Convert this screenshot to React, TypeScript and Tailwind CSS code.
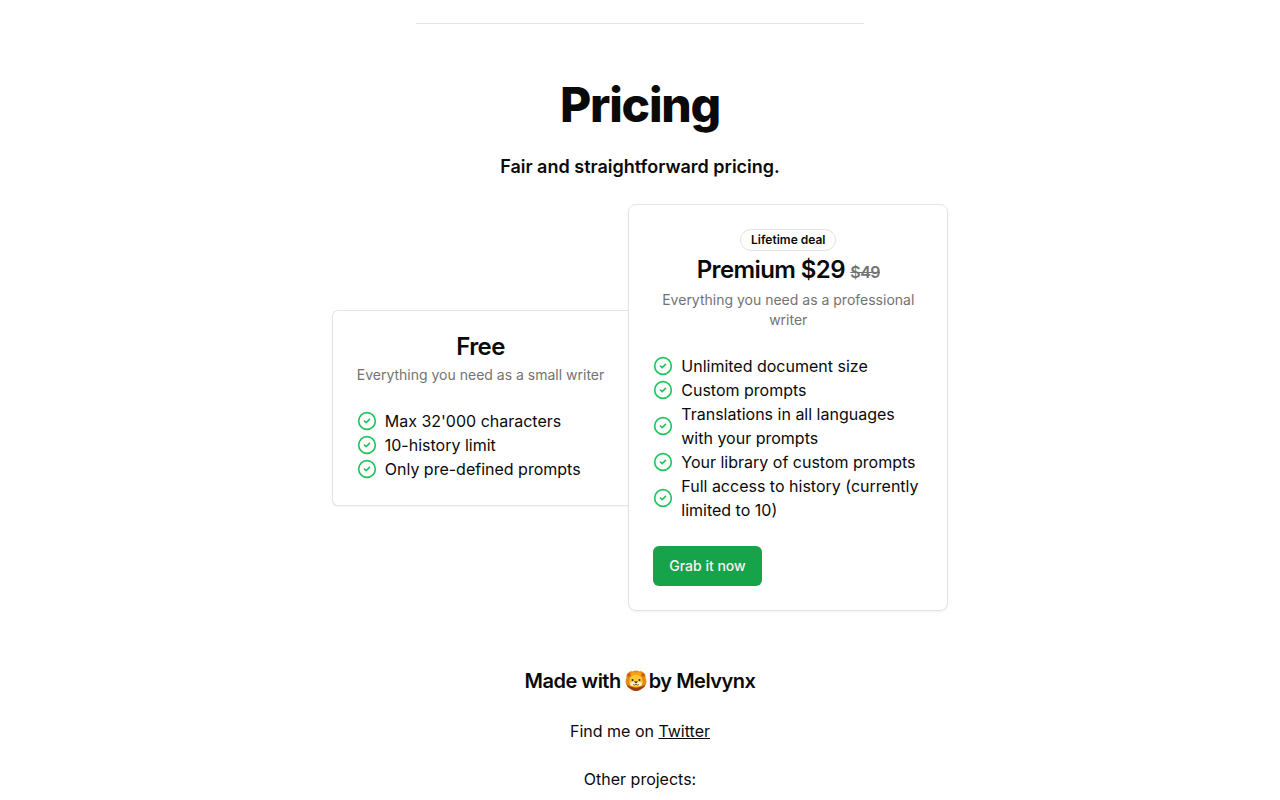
import type { ReactNode } from 'react'
import { CircleCheck } from 'lucide-react'

const FREE_FEATURES = ["Max 32'000 characters", '10-history limit', 'Only pre-defined prompts']

const PREMIUM_FEATURES = [
    'Unlimited document size',
    'Custom prompts',
    'Translations in all languages with your prompts',
    'Your library of custom prompts',
    'Full access to history (currently limited to 10)',
]

export default function App() {
    return (
        <div className="min-h-screen bg-white font-['Inter',sans-serif] text-[#0a0a0a]">
            <main className="flex flex-col items-center pt-[23px]">
                <hr className="w-full max-w-md border-[#e4e4e7]" />

                <section className="mt-[57px] flex w-full flex-col items-center gap-6">
                    <h2 className="text-5xl leading-none font-extrabold tracking-tight">Pricing</h2>
                    <p className="text-lg leading-[27px] font-semibold">Fair and straightforward pricing.</p>

                    <div className="flex items-center justify-center max-sm:flex-col">
                        <div className="rounded-l-md border border-r-0 border-[#e4e4e7] bg-white p-6 shadow-xs">
                            <div className="flex flex-col items-center gap-1.5 text-center">
                                <h3 className="text-2xl leading-none font-semibold tracking-tight">Free</h3>
                                <p className="text-sm text-[#737373]">Everything you need as a small writer</p>
                            </div>
                            <FeatureList features={FREE_FEATURES} />
                        </div>

                        <div className="max-w-xs rounded-lg border border-[#e4e4e7] bg-white p-6 shadow-xs">
                            <div className="flex flex-col items-center gap-1.5 text-center">
                                <span className="rounded-full border border-[#e4e4e7] px-2.5 py-0.5 text-xs font-semibold">Lifetime deal</span>
                                <h3 className="pb-0.5 text-2xl leading-[25px] font-semibold tracking-tight">
                                    Premium $29 <s className="text-base leading-none text-[#737373]">$49</s>
                                </h3>
                                <p className="text-sm text-[#737373]">Everything you need as a professional writer</p>
                            </div>
                            <FeatureList features={PREMIUM_FEATURES} />
                            <button type="button" className="mt-6 h-10 rounded-md bg-[#16a34a] px-4 text-sm font-medium text-[#fff1f2] hover:bg-[#15803d]">
                                Grab it now
                            </button>
                        </div>
                    </div>
                </section>

                <footer className="mt-14 flex flex-col items-center gap-6">
                    <h3 className="flex items-center text-xl font-semibold tracking-tight">
                        <span className="mr-1">Made with</span>
                        <Lion />
                        <span className="ml-0.5">by Melvynx</span>
                    </h3>
                    <p>
                        Find me on <FooterLink href="#twitter">Twitter</FooterLink>
                    </p>
                    <p>Other projects:</p>
                </footer>
            </main>
        </div>
    )
}

function FeatureList({ features }: { features: string[] }) {
    return (
        <ul className="mt-6">
            {features.map((feature) => (
                <li key={feature} className="flex items-center gap-2">
                    <CircleCheck size={20} className="shrink-0 text-[#22c55e]" />
                    <span>{feature}</span>
                </li>
            ))}
        </ul>
    )
}

function FooterLink({ href, children }: { href: string; children: ReactNode }) {
    return (
        <a href={href} className="underline">
            {children}
        </a>
    )
}

function Lion() {
    return (
        <svg viewBox="0 0 44 44" className="h-[22px] w-[22px]" role="img" aria-label="lion">
            {/* mane */}
            <path d="M7 5 Q11 1 15 3 Q22 -1 29 3 Q33 1 37 5 Q42 10 41 16 Q44 22 42 28 Q40 35 33 38 Q28 42 22 42 Q16 42 11 38 Q4 35 2 28 Q0 22 3 16 Q2 10 7 5Z" fill="#e58a17" />
            <path d="M3 29 Q8 32 14 34 Q22 37 30 34 Q36 32 41 29 Q39 35 33 38 Q28 42 22 42 Q16 42 11 38 Q5 35 3 29Z" fill="#9c3d12" />
            <path d="M10 7 Q16 3 22 5 Q28 3 34 7 Q37 12 35 16 H9 Q7 12 10 7Z" fill="#f6a21c" />
            {/* ears */}
            <circle cx="8" cy="10" r="4" fill="#c9660d" />
            <circle cx="36" cy="10" r="4" fill="#c9660d" />
            {/* face */}
            <path d="M22 10 C30 10 35 15 35 22 C37 29 30 34 22 34 C14 34 7 29 9 22 C9 15 14 10 22 10Z" fill="#fdc72f" />
            <ellipse cx="16" cy="28" rx="6" ry="4" fill="#fff3d6" />
            <ellipse cx="28" cy="28" rx="6" ry="4" fill="#fff3d6" />
            <circle cx="15" cy="20" r="2" fill="#40240f" />
            <circle cx="29" cy="20" r="2" fill="#40240f" />
            <path d="M18 23 H26 L22 27Z" fill="#40240f" />
            <path d="M16 29 Q20 32 22 28 Q24 32 28 29" fill="none" stroke="#40240f" strokeWidth="1.5" />
        </svg>
    )
}
